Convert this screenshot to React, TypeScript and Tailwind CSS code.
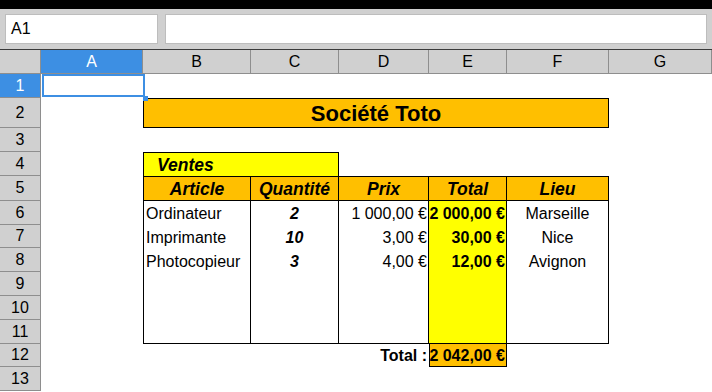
import React from 'react';

const cols = ['A', 'B', 'C', 'D', 'E', 'F', 'G'];

type Item = { article: string; qty: string; price: string; total: string; place: string };

const items: Item[] = [
  { article: 'Ordinateur', qty: '2', price: '1 000,00 €', total: '2 000,00 €', place: 'Marseille' },
  { article: 'Imprimante', qty: '10', price: '3,00 €', total: '30,00 €', place: 'Nice' },
  { article: 'Photocopieur', qty: '3', price: '4,00 €', total: '12,00 €', place: 'Avignon' },
];

const rowStart = [
  'row-start-2', 'row-start-3', 'row-start-4', 'row-start-5', 'row-start-6', 'row-start-7', 'row-start-8',
  'row-start-9', 'row-start-10', 'row-start-11', 'row-start-12', 'row-start-13', 'row-start-14',
];
const colStart = ['col-start-2', 'col-start-3', 'col-start-4', 'col-start-5', 'col-start-6', 'col-start-7', 'col-start-8'];

// one bordered column block covering rows 6 to 11
function BodyColumn({
  col,
  values,
  className,
}: {
  col: string;
  values: string[];
  className: string;
}) {
  return (
    <div className={`${col} row-start-7 row-span-6 flex flex-col border-b border-r border-black ${className}`}>
      {values.map((v, i) => (
        <div key={i} className="flex h-[24px] shrink-0 items-center whitespace-nowrap pt-[1px]">
          {v}
        </div>
      ))}
    </div>
  );
}

export default function App() {
  return (
    <div className="h-[392px] w-[712px] overflow-hidden bg-white font-['Liberation_Sans',Arial,sans-serif] text-[16px] text-black">
      <div className="h-[9px] bg-black" />
      <div className="flex h-[41px] items-start gap-[7px] border-b border-[#3a3a3a] bg-[#d0d0d0] px-[5px] pt-[5px]">
        <div className="flex h-[30px] w-[153px] items-center border border-[#bdbdbd] bg-white pl-[5px]">A1</div>
        <div className="h-[30px] flex-1 border border-[#bdbdbd] bg-white" />
      </div>

      <div className="grid grid-cols-[41px_102px_108px_88px_90px_78px_102px_103px] grid-rows-[24px_24px_30px_24px_24px_25px_24px_23px_24px_24px_24px_24px_23px_24px]">
        {/* corner + column headers */}
        <div className="col-start-1 row-start-1 border-b border-r border-[#8e8e8e] bg-[#d0d0d0]" />
        {cols.map((c, i) => (
          <div
            key={c}
            className={`${colStart[i]} row-start-1 flex items-center justify-center border-b border-r border-[#8e8e8e] ${
              c === 'A' ? 'bg-[#3d8fe3] text-white' : 'bg-[#d0d0d0]'
            }`}
          >
            {c}
          </div>
        ))}

        {/* row headers */}
        {rowStart.map((r, i) => (
          <div
            key={r}
            className={`col-start-1 ${r} flex items-center justify-center border-b border-r border-[#8e8e8e] ${
              i === 0 ? 'bg-[#3d8fe3] text-white' : 'bg-[#d0d0d0]'
            }`}
          >
            {i + 1}
          </div>
        ))}

        {/* selected cell A1 */}
        <div className="relative col-start-2 row-start-2">
          <div className="absolute bottom-[1px] left-[1px] right-[-2px] top-0 border-2 border-[#3d8fe3]" />
          <div className="absolute bottom-[-3px] right-[-5px] h-[5px] w-[5px] bg-[#3d8fe3]" />
        </div>

        {/* title */}
        <div className="col-start-3 col-span-5 row-start-3 flex items-center justify-center border border-black bg-[#ffbf00] pt-[1px] text-[22px] font-bold">
          Société Toto
        </div>

        {/* Ventes */}
        <div className="col-start-3 col-span-2 row-start-5 flex items-center border-l border-r border-t border-black bg-[#ffff00] pl-[13px] pt-[2px] text-[17.5px] font-bold italic">
          Ventes
        </div>

        {/* column titles */}
        {['Article', 'Quantité', 'Prix', 'Total', 'Lieu'].map((t, i) => (
          <div
            key={t}
            className={`${colStart[i + 1]} row-start-6 flex items-center justify-center border-b border-r border-t border-black bg-[#ffbf00] pt-[1px] text-[17.5px] font-bold italic ${
              i === 0 ? 'border-l' : ''
            }`}
          >
            {t}
          </div>
        ))}

        {/* body */}
        <BodyColumn col="col-start-3" values={items.map((x) => x.article)} className="border-l pl-[2px]" />
        <BodyColumn col="col-start-4" values={items.map((x) => x.qty)} className="items-center font-bold italic" />
        <BodyColumn col="col-start-5" values={items.map((x) => x.price)} className="items-end pr-[1px]" />
        <BodyColumn col="col-start-6" values={items.map((x) => x.total)} className="items-end bg-[#ffff00] pr-[1px] font-bold" />
        <BodyColumn col="col-start-7" values={items.map((x) => x.place)} className="items-center" />

        {/* grand total */}
        <div className="col-start-5 row-start-13 flex items-center justify-end pr-[2px] pt-[1px] font-bold">Total :</div>
        <div className="col-start-6 row-start-13 flex items-center justify-end whitespace-nowrap border-b border-l border-r border-black bg-[#ffbf00] pr-[1px] pt-[1px] font-bold">
          2 042,00 €
        </div>
      </div>
    </div>
  );
}
